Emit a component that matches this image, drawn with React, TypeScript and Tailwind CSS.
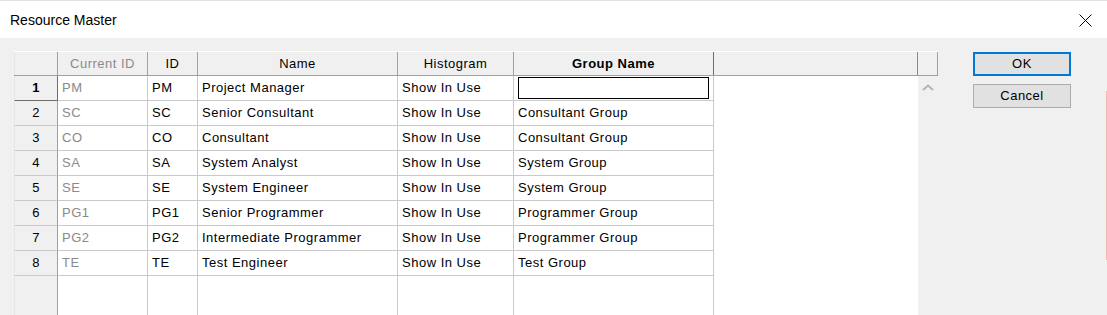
import React from "react";

type Row = {
  currentId: string;
  id: string;
  name: string;
  histogram: string;
  group: string;
};

const rows: Row[] = [
  { currentId: "PM", id: "PM", name: "Project Manager", histogram: "Show In Use", group: "" },
  { currentId: "SC", id: "SC", name: "Senior Consultant", histogram: "Show In Use", group: "Consultant Group" },
  { currentId: "CO", id: "CO", name: "Consultant", histogram: "Show In Use", group: "Consultant Group" },
  { currentId: "SA", id: "SA", name: "System Analyst", histogram: "Show In Use", group: "System Group" },
  { currentId: "SE", id: "SE", name: "System Engineer", histogram: "Show In Use", group: "System Group" },
  { currentId: "PG1", id: "PG1", name: "Senior Programmer", histogram: "Show In Use", group: "Programmer Group" },
  { currentId: "PG2", id: "PG2", name: "Intermediate Programmer", histogram: "Show In Use", group: "Programmer Group" },
  { currentId: "TE", id: "TE", name: "Test Engineer", histogram: "Show In Use", group: "Test Group" },
];

const cell = "h-full border-r border-b border-[#cacaca] px-[4px] flex items-center whitespace-nowrap overflow-hidden";
const head = "h-full border-r border-[#a0a0a0] flex items-center justify-center whitespace-nowrap";

const App: React.FC = () => {
  return (
    <div
      className="w-[1107px] h-[315px] overflow-hidden flex flex-col bg-[#f0f0f0] text-black"
      style={{ fontFamily: '"Liberation Sans", Arial, sans-serif' }}
    >
      {/* Title bar */}
      <div className="h-[38px] shrink-0 bg-white border-t border-[#e3e3e3] flex items-center pl-[10px] pr-[15px]">
        <span className="text-[14px] pt-[1px]">Resource Master</span>
        <div className="flex-1" />
        <svg width="13" height="13" viewBox="0 0 13 13" className="mt-[1px]">
          <path d="M0.5 0.5 L12.5 12.5 M12.5 0.5 L0.5 12.5" stroke="#000" strokeWidth="1" />
        </svg>
      </div>

      {/* Body */}
      <div className="flex-1 flex pl-[14px] pt-[13px] text-[13px] tracking-[0.5px]">
        {/* Grid */}
        <div className="w-[924px] flex flex-col">
          {/* Header */}
          <div className="h-[25px] flex border-t border-white border-b border-b-[#a0a0a0] bg-[#f0f0f0]">
            <div className={`${head} w-[44px] border-l border-l-[#e6e6e6]`} />
            <div className={`${head} w-[90px] text-[#8a8a8a]`}>Current ID</div>
            <div className={`${head} w-[50px]`}>ID</div>
            <div className={`${head} w-[200px]`}>Name</div>
            <div className={`${head} w-[116px]`}>Histogram</div>
            <div className={`${head} w-[200px] font-bold border-r-[#707070]`}>Group Name</div>
            <div className={`${head} w-[204px] border-r-[#8a8a8a]`} />
            <div className={`${head} w-[20px]`} />
          </div>

          {rows.map((r, i) => (
            <div key={r.id} className="h-[25px] flex">
              <div
                className={`w-[44px] h-full flex items-center justify-center border-l border-l-[#e6e6e6] ${
                  i === 0
                    ? "font-bold border-r border-b border-[#6e6e6e]"
                    : "border-r border-b border-r-[#a0a0a0] border-b-[#cacaca]"
                }`}
              >
                {i + 1}
              </div>
              <div className={`${cell} w-[90px] bg-white text-[#8a8a8a]`}>{r.currentId}</div>
              <div className={`${cell} w-[50px] bg-white`}>{r.id}</div>
              <div className={`${cell} w-[200px] bg-white`}>{r.name}</div>
              <div className={`${cell} w-[116px] bg-white`}>{r.histogram}</div>
              <div className={`${cell} w-[200px] bg-white ${i === 0 ? "p-[1px]" : ""}`}>
                {i === 0 ? (
                  <div className="w-full h-full border-[1.5px] border-black bg-white" />
                ) : (
                  r.group
                )}
              </div>
              <div className="w-[204px] h-full bg-white" />
              <div className="w-[20px] h-full relative">
                {i === 0 && (
                  <svg width="12" height="7" viewBox="0 0 12 7" className="absolute left-[4px] top-[8px]">
                    <path d="M1 6 L6 1.5 L11 6" fill="none" stroke="#b4b4b4" strokeWidth="2" />
                  </svg>
                )}
              </div>
            </div>
          ))}

          {/* Empty remainder */}
          <div className="flex-1 flex">
            <div className="w-[44px] border-l border-l-[#e6e6e6] border-r border-r-[#a0a0a0]" />
            <div className="w-[90px] bg-white border-r border-[#cacaca]" />
            <div className="w-[50px] bg-white border-r border-[#cacaca]" />
            <div className="w-[200px] bg-white border-r border-[#cacaca]" />
            <div className="w-[116px] bg-white border-r border-[#cacaca]" />
            <div className="w-[200px] bg-white border-r border-[#cacaca]" />
            <div className="w-[204px] bg-white" />
            <div className="w-[20px]" />
          </div>
        </div>

        {/* Buttons */}
        <div className="ml-[35px] pt-[1px] flex flex-col gap-[8px] w-[98px]">
          <button className="h-[24px] border-2 border-[#0078d7] bg-[#e1e1e1] flex items-center justify-center">
            OK
          </button>
          <button className="h-[24px] border border-[#adadad] bg-[#e1e1e1] flex items-center justify-center">
            Cancel
          </button>
        </div>

        <div className="flex-1" />
        <div className="w-px flex flex-col">
          <div className="h-[40px]" />
          <div className="flex-1 bg-[#f3b9b9]" />
          <div className="h-[55px]" />
        </div>
      </div>
    </div>
  );
};

export default App;
